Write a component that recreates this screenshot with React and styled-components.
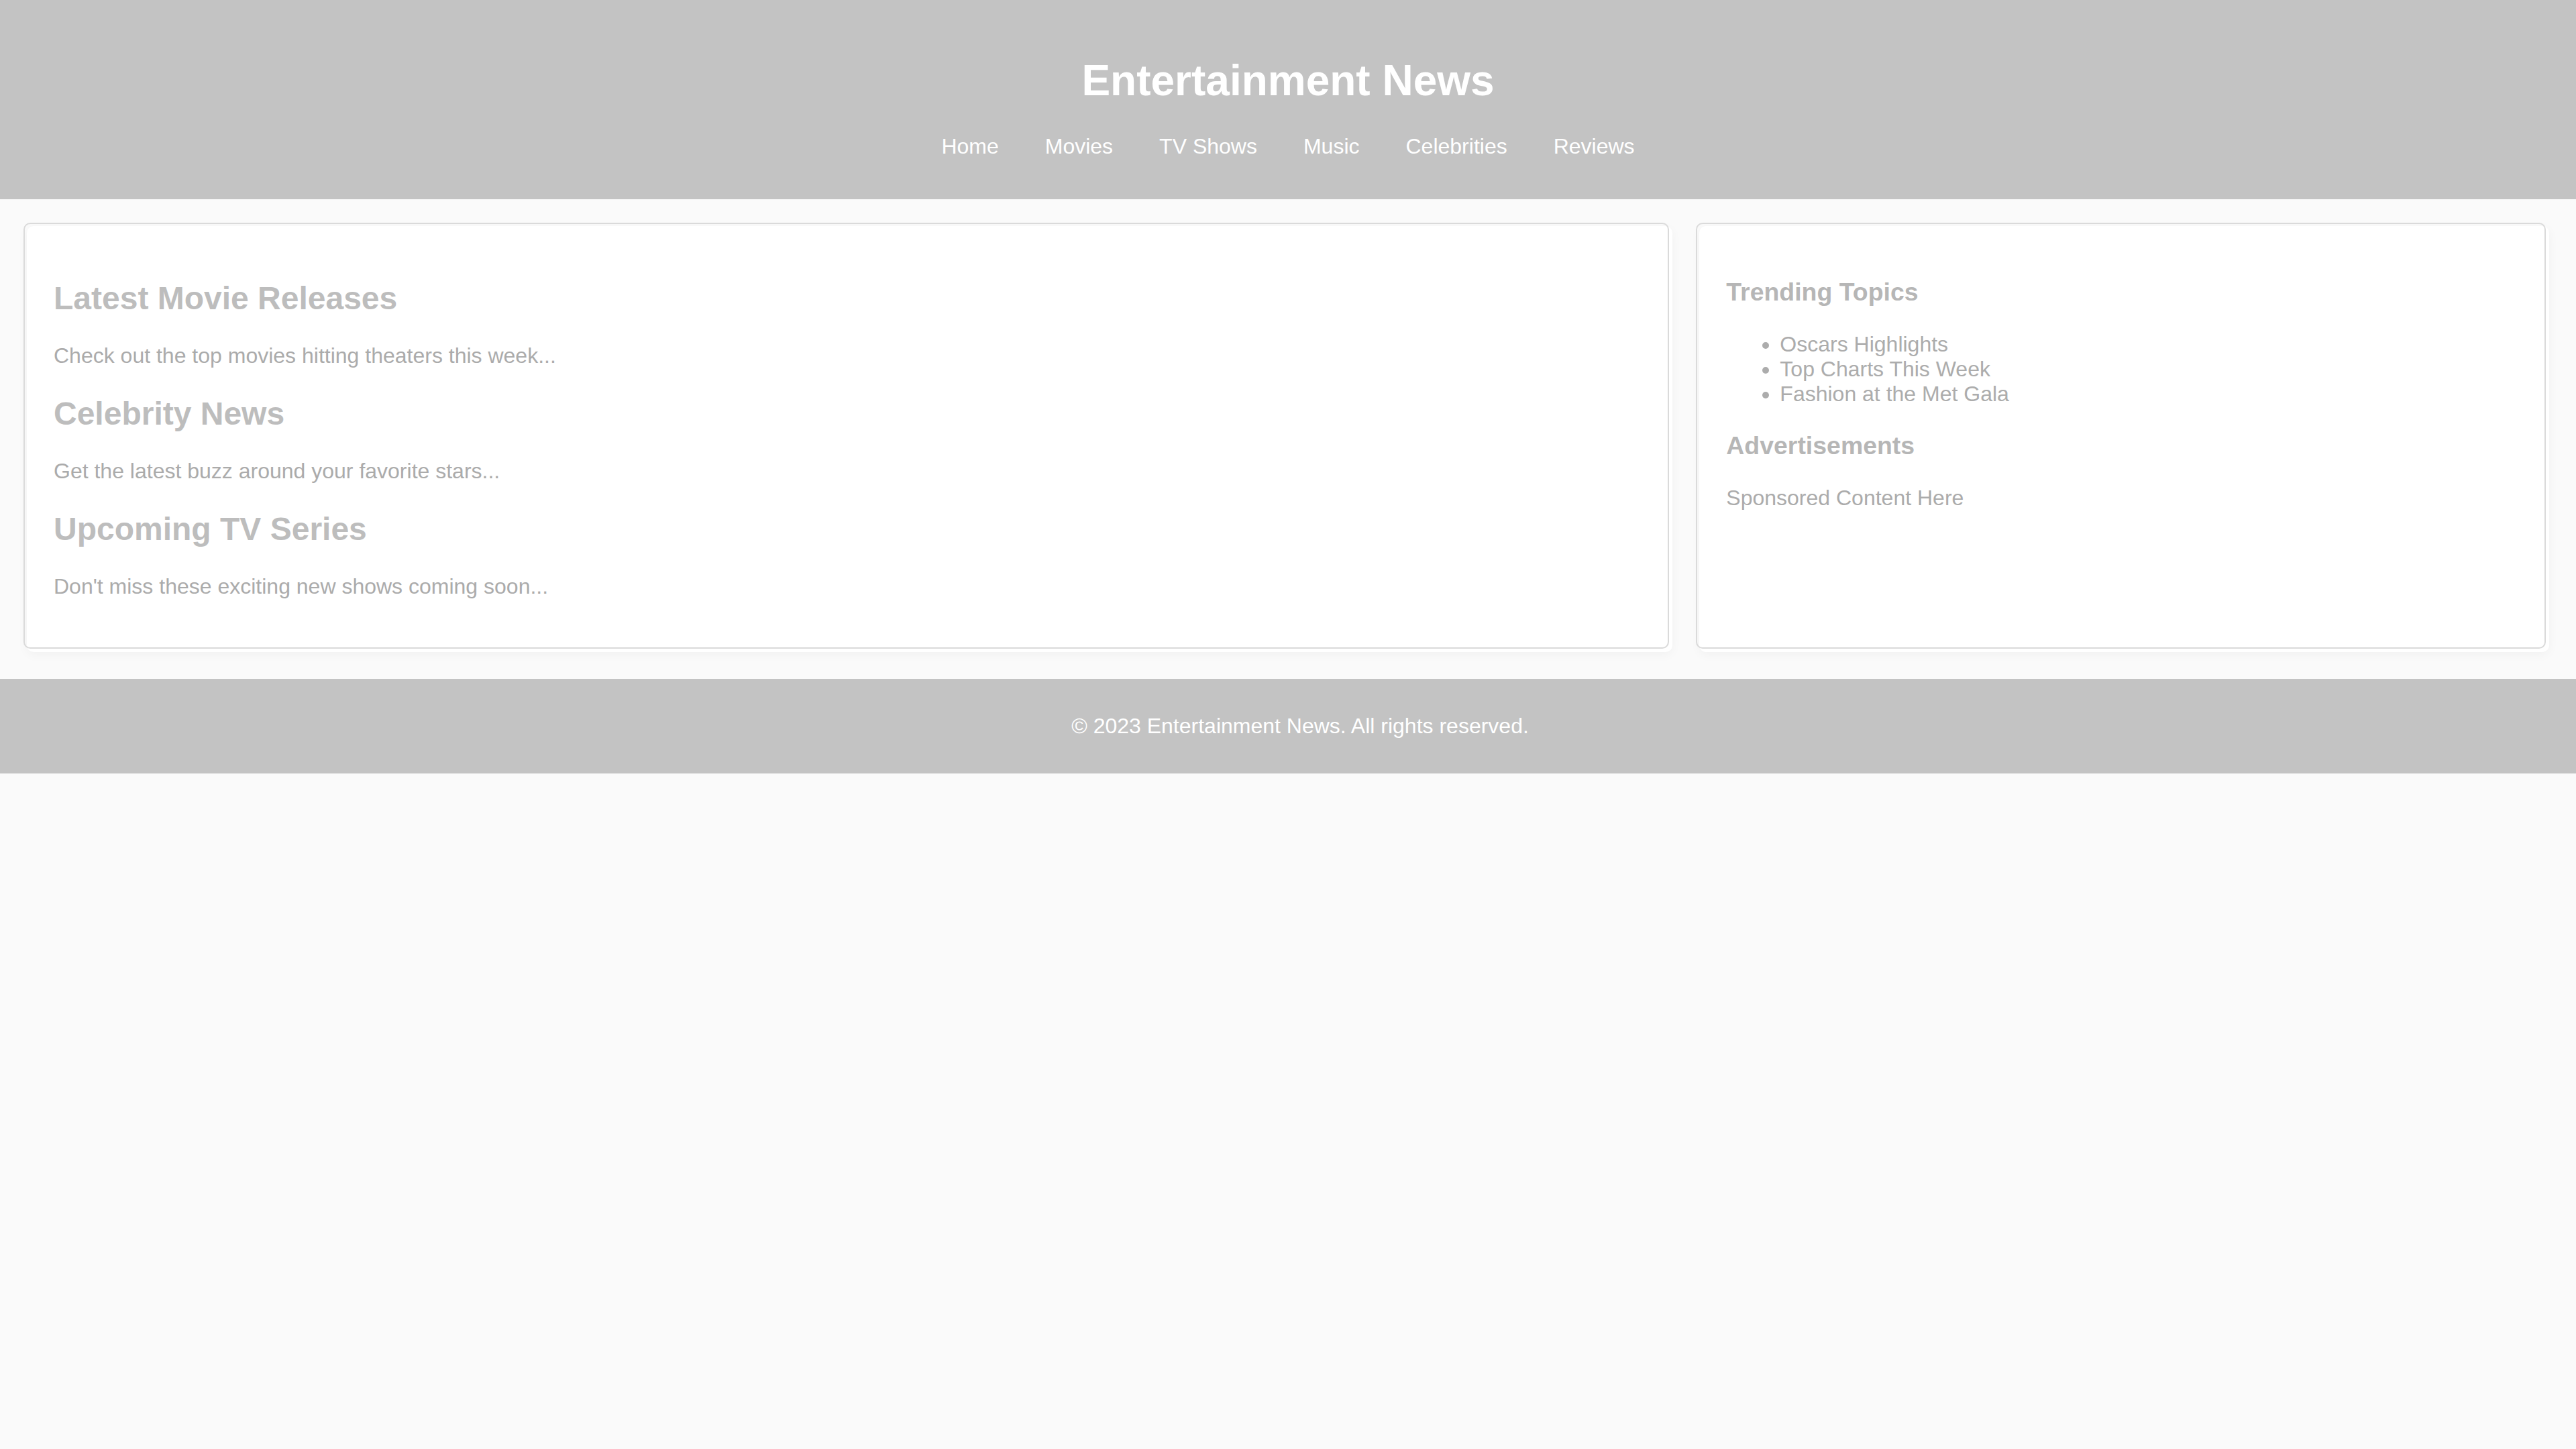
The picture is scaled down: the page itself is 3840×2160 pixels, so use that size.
import React from 'react';
import styled, { createGlobalStyle } from 'styled-components';

const GlobalStyle = createGlobalStyle`
  body {
    margin: 0;
    background: #fafafa;
    font-family: 'Liberation Sans', Arial, Helvetica, sans-serif;
    font-size: 32px;
  }
`;

const Header = styled.header`
  background: #c3c3c3;
  color: #ffffff;
  text-align: center;
  padding: 40px 0;
`;

const Title = styled.h1`
  font-size: 64px;
  font-weight: bold;
  margin: 43px 0 23px;
`;

const Nav = styled.nav`
  display: flex;
  justify-content: center;
  gap: 69px;
`;

const NavLink = styled.a`
  color: #ffffff;
  text-decoration: none;
  font-size: 32px;
  padding: 20px 0;
`;

const Main = styled.main`
  display: flex;
  gap: 40px;
  padding: 40px;
`;

const Card = styled.section`
  position: relative;
  flex: ${(p) => p.grow} 1 0;
  background: #ffffff;
  border-radius: 10px;
  padding: 40px 40px 47px;
  box-shadow: 0 4px 16px rgba(0, 0, 0, 0.04);

  &::before {
    content: '';
    position: absolute;
    top: -5px;
    left: -5px;
    right: 5px;
    bottom: 5px;
    border: 2px solid #dadada;
    border-radius: 10px;
    pointer-events: none;
  }
`;

const ArticleTitle = styled.h2`
  font-size: 48px;
  font-weight: bold;
  color: #bdbdbd;
  margin: 40px 0;
`;

const Text = styled.p`
  font-size: 32px;
  color: #ababab;
  margin: 32px 0;
`;

const SideTitle = styled.h3`
  font-size: 37.44px;
  font-weight: bold;
  color: #b6b6b6;
  margin: 37.44px 0;
`;

const TopicList = styled.ul`
  margin: 32px 0;
  padding-left: 80px;
  color: #acacac;
`;

const Topic = styled.li`
  font-size: 32px;
`;

const Footer = styled.footer`
  background: #c3c3c3;
  color: #ffffff;
  text-align: center;
  padding: 20px 0 20px 36px;
`;

const FooterText = styled.p`
  margin: 32px 0;
  font-size: 32px;
`;

const links = ['Home', 'Movies', 'TV Shows', 'Music', 'Celebrities', 'Reviews'];

const articles = [
  { title: 'Latest Movie Releases', text: 'Check out the top movies hitting theaters this week...' },
  { title: 'Celebrity News', text: 'Get the latest buzz around your favorite stars...' },
  { title: 'Upcoming TV Series', text: "Don't miss these exciting new shows coming soon..." },
];

const topics = ['Oscars Highlights', 'Top Charts This Week', 'Fashion at the Met Gala'];

const App = () => (
  <>
    <GlobalStyle />
    <Header>
      <Title>Entertainment News</Title>
      <Nav>
        {links.map((l) => (
          <NavLink key={l} href="#">{l}</NavLink>
        ))}
      </Nav>
    </Header>
    <Main>
      <Card grow={2}>
        {articles.map((a) => (
          <article key={a.title}>
            <ArticleTitle>{a.title}</ArticleTitle>
            <Text>{a.text}</Text>
          </article>
        ))}
      </Card>
      <Card as="aside" grow={1}>
        <SideTitle>Trending Topics</SideTitle>
        <TopicList>
          {topics.map((t) => (
            <Topic key={t}>{t}</Topic>
          ))}
        </TopicList>
        <SideTitle>Advertisements</SideTitle>
        <Text>Sponsored Content Here</Text>
      </Card>
    </Main>
    <Footer>
      <FooterText>© 2023 Entertainment News. All rights reserved.</FooterText>
    </Footer>
  </>
);

export default App;
